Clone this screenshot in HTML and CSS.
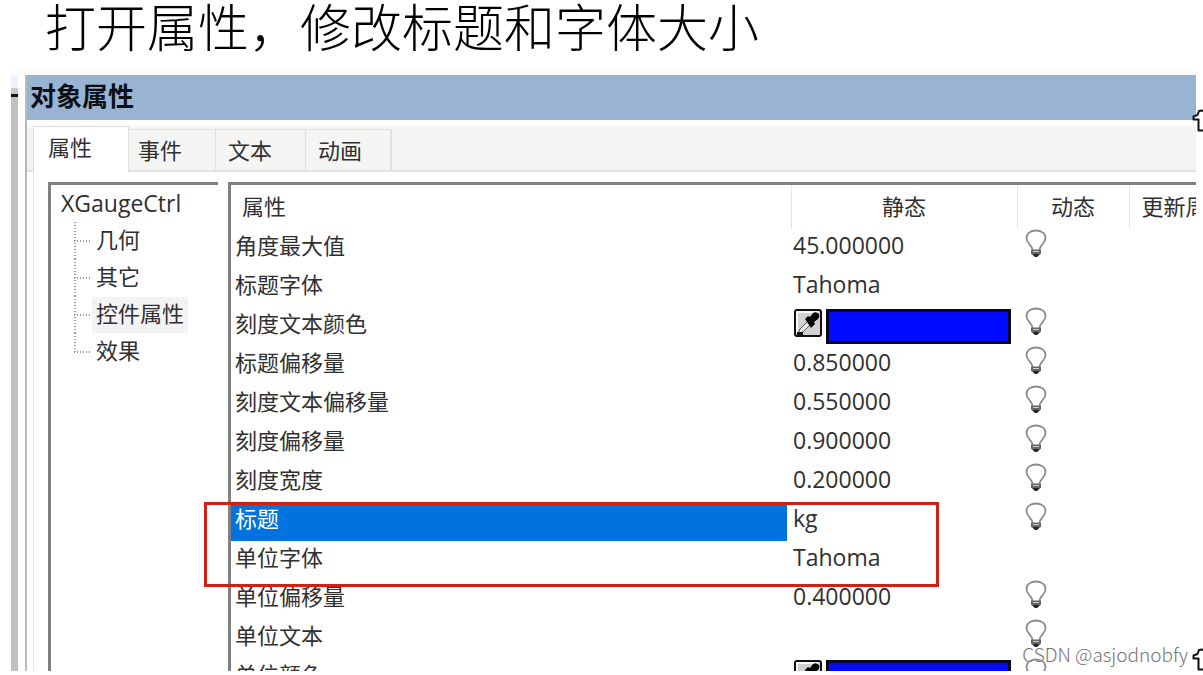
FILE: index.html
```html
<!DOCTYPE html>
<html lang="zh-CN">
<head>
    <meta charset="UTF-8">
    <meta name="viewport" content="width=device-width, initial-scale=1.0">
    <title>打开属性，修改标题和字体大小</title>
    <link rel="stylesheet" href="styles.css">
</head>
<body>
    <!-- Shared icons -->
    <svg class="icon-defs" aria-hidden="true">
        <symbol id="bulb" viewBox="0 0 22 29">
            <path d="M7.500 21C7.500 16 1.500 14.500 1.500 9C1.500 4 6 1.500 11 1.500S20.500 4 20.500 9C20.500 14.500 14.500 16 14.500 21" fill="#fff" stroke="#8c8c8c" stroke-width="1.800"/>
            <path d="M6 20.500H16V24.500L13 27.500H9L6 24.500Z" fill="#666"/>
            <path d="M8 22.500H14" stroke="#ccc" stroke-width="1"/>
            <path d="M8 25H14L12 28H10Z" fill="#222"/>
        </symbol>
        <symbol id="dropper" viewBox="0 0 28 28">
            <rect x="1" y="1" width="26" height="26" rx="2" fill="#d2d2d2" stroke="#111" stroke-width="2"/>
            <path d="M3 24V3H24" fill="none" stroke="#fafafa" stroke-width="2"/>
            <path d="M4 25L6 20L15 11L18 14L9 23Z" fill="#eee" stroke="#555" stroke-width="1"/>
            <path d="M3 23H9V26H3Z" fill="#111"/>
            <path d="M11 10L14 7L16 8L19 4Q22 2 25 5Q26 8 24 10L20 13L21 15L17 19Z" fill="#050505"/>
        </symbol>
        <symbol id="arrow" viewBox="0 0 20 24">
            <path d="M10 1.500L7 2L5.500 6L1.500 7.500V10.500H6.500V21.500H13.500V10.500H18.500V7.500L14.500 6L13 2Z" fill="#fff" stroke="#111" stroke-width="2" stroke-linejoin="round"/>
        </symbol>
    </svg>

    <h1>打开属性，修改标题和字体大小</h1>

    <main class="screen">
        <div class="screen-edge"></div>
        <section class="dialog">
            <h2>对象属性</h2>
            <div class="tabs" role="tablist">
                <button class="tab active" role="tab" aria-selected="true">属性</button>
                <button class="tab" role="tab">事件</button>
                <button class="tab" role="tab">文本</button>
                <button class="tab" role="tab">动画</button>
            </div>

            <div class="workspace">
                <nav class="tree">
                    <span class="tree-root">XGaugeCtrl</span>
                    <ul>
                        <li><span>几何</span></li>
                        <li><span>其它</span></li>
                        <li><span class="current">控件属性</span></li>
                        <li><span>效果</span></li>
                    </ul>
                </nav>

                <div class="grid">
                    <table>
                        <colgroup>
                            <col class="col-name">
                            <col class="col-static">
                            <col class="col-dynamic">
                            <col>
                        </colgroup>
                        <thead>
                            <tr><th>属性</th><th>静态</th><th>动态</th><th>更新周</th></tr>
                        </thead>
                        <tbody>
                            <tr><td>角度最大值</td><td>45.000000</td><td><svg class="bulb"><use href="#bulb"/></svg></td><td></td></tr>
                            <tr><td>标题字体</td><td>Tahoma</td><td></td><td></td></tr>
                            <tr>
                                <td>刻度文本颜色</td>
                                <td>
                                    <div class="color-field">
                                        <button class="picker" aria-label="取色"><svg><use href="#dropper"/></svg></button>
                                        <input type="color" value="#000bff" aria-label="刻度文本颜色">
                                    </div>
                                </td>
                                <td><svg class="bulb"><use href="#bulb"/></svg></td><td></td>
                            </tr>
                            <tr><td>标题偏移量</td><td>0.850000</td><td><svg class="bulb"><use href="#bulb"/></svg></td><td></td></tr>
                            <tr><td>刻度文本偏移量</td><td>0.550000</td><td><svg class="bulb"><use href="#bulb"/></svg></td><td></td></tr>
                            <tr><td>刻度偏移量</td><td>0.900000</td><td><svg class="bulb"><use href="#bulb"/></svg></td><td></td></tr>
                            <tr><td>刻度宽度</td><td>0.200000</td><td><svg class="bulb"><use href="#bulb"/></svg></td><td></td></tr>
                            <tr class="selected"><td>标题</td><td>kg</td><td><svg class="bulb"><use href="#bulb"/></svg></td><td></td></tr>
                            <tr><td>单位字体</td><td>Tahoma</td><td></td><td></td></tr>
                            <tr><td>单位偏移量</td><td>0.400000</td><td><svg class="bulb"><use href="#bulb"/></svg></td><td></td></tr>
                            <tr><td>单位文本</td><td></td><td><svg class="bulb"><use href="#bulb"/></svg></td><td></td></tr>
                            <tr>
                                <td>单位颜色</td>
                                <td>
                                    <div class="color-field">
                                        <button class="picker" aria-label="取色"><svg><use href="#dropper"/></svg></button>
                                        <input type="color" value="#000bff" aria-label="单位颜色">
                                    </div>
                                </td>
                                <td><svg class="bulb"><use href="#bulb"/></svg></td><td></td>
                            </tr>
                        </tbody>
                    </table>
                </div>

                <div class="callout"></div>
            </div>
        </section>
    </main>

    <svg class="arrow arrow-top"><use href="#arrow"/></svg>
    <svg class="arrow arrow-bottom"><use href="#arrow"/></svg>
    <div class="watermark">CSDN @asjodnobfy</div>
</body>
</html>
```

FILE: styles.css
```css
:root {
    --color-title: #99b4d3;
    --color-select: #0073df;
    --color-strip: #f3f4f1;
    --color-line: #e1e3e1;
    --color-bevel: #808080;
    --color-callout: #d32015;
    --color-text: #303030;
}

* {
    margin: 0;
    padding: 0;
    box-sizing: border-box;
}

body {
    font-family: 'Noto Sans CJK SC', sans-serif;
    font-size: 22px;
    color: var(--color-text);
    background: #fff;
    height: 100vh;
    padding: 0 7px 4px 11px;
    display: flex;
    flex-direction: column;
    position: relative;
    overflow: hidden;
}

.icon-defs {
    display: none;
}

h1 {
    font-size: 51px;
    font-weight: 300;
    line-height: 50px;
    height: 70px;
    padding-left: 34px;
    color: #000;
    white-space: nowrap;
}

.screen {
    flex: 1;
    min-height: 0;
    display: flex;
    gap: 7px;
    padding-top: 5px;
    background: linear-gradient(#fafafd, #fff 5px);
    overflow: hidden;
}

/* sliver of the window behind the dialog */
.screen-edge {
    width: 7px;
    background: linear-gradient(#f1f1fb 13px, #c8c8d0 13px, #c8c8d0 19px, #111 19px, #111 22px, #c0c0c0 22px);
}

.dialog {
    flex: 1;
    min-width: 0;
    display: flex;
    flex-direction: column;
    border-left: 2px solid #b3bbc3;
    overflow: hidden;
}

h2 {
    flex: none;
    font-size: 26px;
    font-weight: 700;
    line-height: 40px;
    padding: 0 0 5px 3px;
    color: #0b1017;
    background: var(--color-title);
}

.tabs {
    flex: none;
    display: flex;
    align-items: flex-end;
    height: 52px;
    padding-left: 6px;
    background: linear-gradient(#fff 3px, var(--color-strip) 10px);
    border-bottom: 2px solid var(--color-line);
}

.tab {
    width: 90px;
    height: 41px;
    padding: 0 0 3px 12px;
    font: inherit;
    text-align: left;
    color: inherit;
    background: #f5f6f4;
    border: 1px solid #dfe1df;
    border-width: 1px 0 0 1px;
}

.tab:last-child {
    width: 87px;
    border-right-width: 2px;
}

.tab.active {
    z-index: 1;
    width: 96px;
    height: 46px;
    margin: 0 -4px -2px 0;
    padding: 0 0 8px 14px;
    background: #fff;
    border-right-width: 1px;
}

.workspace {
    flex: 1;
    min-height: 0;
    display: flex;
    gap: 10px;
    margin-left: 6px;
    padding: 10px 0 0 14px;
    border-left: 1px solid #e4e6e8;
    position: relative;
}

.tree {
    width: 170px;
    padding: 1px 0 0 10px;
    border-top: 3px solid var(--color-bevel);
    border-left: 3px solid var(--color-bevel);
}

.tree-root {
    display: block;
    height: 36px;
    line-height: 34px;
    font-family: 'Open Sans', sans-serif;
    font-size: 23px;
}

.tree ul {
    list-style: none;
    margin-left: 13px;
}

.tree li {
    display: flex;
    align-items: center;
    height: 37px;
    background:
        repeating-linear-gradient(#999 0 1px, transparent 1px 3px) 0 0 / 2px 100% no-repeat,
        repeating-linear-gradient(90deg, #999 0 1px, transparent 1px 3px) 0 50% / 17px 2px no-repeat;
}

.tree li:last-child {
    background-size: 2px 50%, 17px 2px;
}

.tree li span {
    margin-left: 18px;
    padding: 0 4px 5px;
    line-height: 31px;
}

.tree .current {
    background: #f3f3f3;
}

.grid {
    flex: 1;
    min-width: 0;
    border-top: 3px solid var(--color-bevel);
    border-left: 3px solid var(--color-bevel);
    overflow: hidden;
}

table {
    width: 100%;
    table-layout: fixed;
    border-collapse: collapse;
}

.col-name {
    width: 560px;
}

.col-static {
    width: 226px;
}

.col-dynamic {
    width: 112px;
}

th {
    height: 44px;
    padding-bottom: 4px;
    font-weight: 400;
    white-space: nowrap;
    overflow: hidden;
    border-left: 1px solid #e6e6ea;
}

th:first-child {
    text-align: left;
    padding-left: 11px;
    border-left: none;
}

th:last-child {
    text-align: left;
    padding-left: 12px;
}

td {
    height: 39px;
    padding: 0 4px;
    line-height: 30px;
    vertical-align: top;
    white-space: nowrap;
}

td:nth-child(2) {
    padding: 0 0 0 2px;
    font-family: 'Open Sans', sans-serif;
    font-size: 23px;
    line-height: 32px;
}

td:nth-child(3) {
    padding-left: 8px;
}

.selected td:first-child {
    color: #fff;
    background: linear-gradient(90deg, var(--color-select) 556px, #fff 556px);
}

.bulb {
    display: block;
    width: 22px;
    height: 29px;
}

.color-field {
    display: flex;
    gap: 4px;
    padding: 2px 6px 0 1px;
}

.picker {
    width: 28px;
    height: 28px;
    border: none;
    background: none;
}

.picker svg {
    display: block;
    width: 28px;
    height: 28px;
}

input[type="color"] {
    appearance: none;
    flex: 1;
    min-width: 0;
    height: 35px;
    border: 3px solid #080820;
    background: #000bff;
}

input[type="color"]::-webkit-color-swatch-wrapper {
    padding: 0;
}

input[type="color"]::-webkit-color-swatch {
    border: none;
}

/* red frame around the two rows to edit */
.callout {
    position: absolute;
    left: 170px;
    top: 330px;
    width: 735px;
    height: 85px;
    border: 3px solid var(--color-callout);
}

.arrow {
    position: absolute;
    right: -9px;
    width: 20px;
    height: 24px;
}

.arrow-top {
    top: 109px;
}

.arrow-bottom {
    bottom: 3px;
}

.watermark {
    position: absolute;
    right: 15px;
    bottom: 8px;
    font-size: 19px;
    font-weight: 300;
    line-height: 26px;
    color: #757575;
    text-shadow: 0 0 2px #fff;
}
```
